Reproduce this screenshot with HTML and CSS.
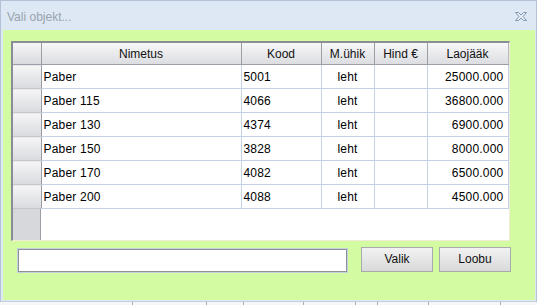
FILE: index.html
```html
<!DOCTYPE html>
<html lang="et">

<head>
    <meta charset="UTF-8">
    <title>Vali objekt...</title>
    <link rel="stylesheet" href="styles.css">
</head>

<body>
    <div class="window">
        <div class="titlebar">
            <span class="title">Vali objekt...</span>
            <svg class="close" width="14" height="11" viewBox="0 0 14 11">
                <path d="M1.5 1.5 H4.5 L7 4 L9.5 1.5 H12.5 L9 5.5 L12.5 9.5 H9.5 L7 7 L4.5 9.5 H1.5 L5 5.5 Z"
                    fill="#e6eef7" stroke="#8297b0" stroke-width="1"/>
            </svg>
        </div>
        <div class="panel">
            <div class="grid">
                <table>
                    <colgroup>
                        <col class="c-rh">
                        <col class="c-name">
                        <col class="c-code">
                        <col class="c-unit">
                        <col class="c-price">
                        <col class="c-stock">
                    </colgroup>
                    <thead>
                        <tr>
                            <th class="rh"></th>
                            <th>Nimetus</th>
                            <th>Kood</th>
                            <th>M.ühik</th>
                            <th>Hind €</th>
                            <th>Laojääk</th>
                        </tr>
                    </thead>
                    <tbody>
                        <tr><td class="rh"></td><td>Paber</td><td>5001</td><td class="mid">leht</td><td></td><td class="num">25000.000</td></tr>
                        <tr><td class="rh"></td><td>Paber 115</td><td>4066</td><td class="mid">leht</td><td></td><td class="num">36800.000</td></tr>
                        <tr><td class="rh"></td><td>Paber 130</td><td>4374</td><td class="mid">leht</td><td></td><td class="num">6900.000</td></tr>
                        <tr><td class="rh"></td><td>Paber 150</td><td>3828</td><td class="mid">leht</td><td></td><td class="num">8000.000</td></tr>
                        <tr><td class="rh"></td><td>Paber 170</td><td>4082</td><td class="mid">leht</td><td></td><td class="num">6500.000</td></tr>
                        <tr><td class="rh"></td><td>Paber 200</td><td>4088</td><td class="mid">leht</td><td></td><td class="num">4500.000</td></tr>
                    </tbody>
                </table>
                <div class="filler"></div>
            </div>
            <div class="controls">
                <input class="search" type="text">
                <button class="btn">Valik</button>
                <button class="btn">Loobu</button>
            </div>
        </div>
    </div>
    <div class="under">
        <span style="width:133px"></span>
        <span style="width:74px"></span>
        <span style="width:37px"></span>
        <span style="width:60px"></span>
        <span style="width:52px"></span>
        <span style="width:22px"></span>
        <span style="width:51px"></span>
        <span style="width:72px"></span>
    </div>
</body>

</html>
```

FILE: styles.css
```css
/* reset */
html,
body {
    margin: 0;
    padding: 0;
}

body {
    width: 537px;
    height: 305px;
    overflow: hidden;
    background: #f6f7f9;
    font-family: 'Liberation Sans', Arial, sans-serif;
    font-size: 12px;
}

/* window */
.window {
    width: 535px;
    height: 300px;
    border: solid 1px #b3c2d4;
    border-bottom-color: #c6d0dc;
    background-color: #dde8f4;
}

.titlebar {
    height: 29px;
    display: flex;
    align-items: center;
    justify-content: space-between;
    padding: 0 8px 0 6px;
}

.titlebar .title {
    color: #9aa3ad;
    font-size: 12px;
    padding-top: 2px;
}

.titlebar .close {
    margin-top: 1px;
}

.panel {
    margin: 0 1px 0 2px;
    height: 270px;
    background-color: #d3fca2;
    padding: 11px 0 0 8px;
    box-sizing: border-box;
}

/* table */
.grid {
    width: 499px;
    height: 200px;
    box-sizing: border-box;
    border-top: solid 2px #8a8e94;
    border-left: solid 2px #8a8e94;
    border-right: solid 1px #f1ecd9;
    border-bottom: solid 1px #f1ecd9;
    background: #fff;
    display: flex;
    flex-direction: column;
}

.grid table {
    border-collapse: collapse;
    table-layout: fixed;
    width: 495px;
}

.c-rh { width: 28px; }
.c-name { width: 200px; }
.c-code { width: 80px; }
.c-unit { width: 53px; }
.c-price { width: 53px; }
.c-stock { width: 81px; }

.grid th {
    height: 21px;
    padding: 0;
    font-weight: normal;
    color: #111;
    text-align: center;
    background: linear-gradient(#f7f7f8, #dcdde1);
    border-bottom: solid 1px #9a9ea5;
    border-right: solid 1px #9a9ea5;
}

.grid th:last-child {
    border-right-color: #b4b7bc;
}

.grid td {
    height: 23px;
    padding: 0 0 0 2px;
    color: #000;
    border-bottom: solid 1px #c3d2e6;
    border-right: solid 1px #c3d2e6;
    white-space: nowrap;
    letter-spacing: 0.2px;
}

.grid td.mid {
    text-align: center;
    padding: 0;
}

.grid td.num {
    text-align: right;
    padding: 0 4px 0 0;
}

.grid .rh {
    background: linear-gradient(#f6f6f7, #d9dadf);
    border-right: solid 1px #9a9ea5;
    border-bottom: solid 1px #c4c6cb;
    padding: 0;
}

.grid th.rh {
    border-bottom-color: #9a9ea5;
}

.filler {
    flex: 1;
    width: 27px;
    background: #d6d8dc;
    border-right: solid 1px #9a9ea5;
}

/* controls */
.controls {
    display: flex;
    align-items: flex-start;
    margin-top: 6px;
    padding-left: 7px;
}

.search {
    width: 329px;
    height: 23px;
    margin-top: 2px;
    box-sizing: border-box;
    border: solid 1px #8e9196;
    outline: solid 1px #c4d0e0;
    background: #fff;
    padding: 0;
}

.btn {
    width: 72px;
    height: 25px;
    margin-left: 6px;
    border: solid 1px #a8aaad;
    background: linear-gradient(#f2f2f2, #d9d9d9);
    font-family: 'Liberation Sans', Arial, sans-serif;
    font-size: 12px;
    color: #111;
    padding: 0 0 2px;
}

.search + .btn {
    margin-left: 14px;
}

/* strip below window */
.under {
    display: flex;
    height: 4px;
}

.under span {
    height: 4px;
    border-right: solid 1px #a5adb8;
    box-sizing: border-box;
}
```
